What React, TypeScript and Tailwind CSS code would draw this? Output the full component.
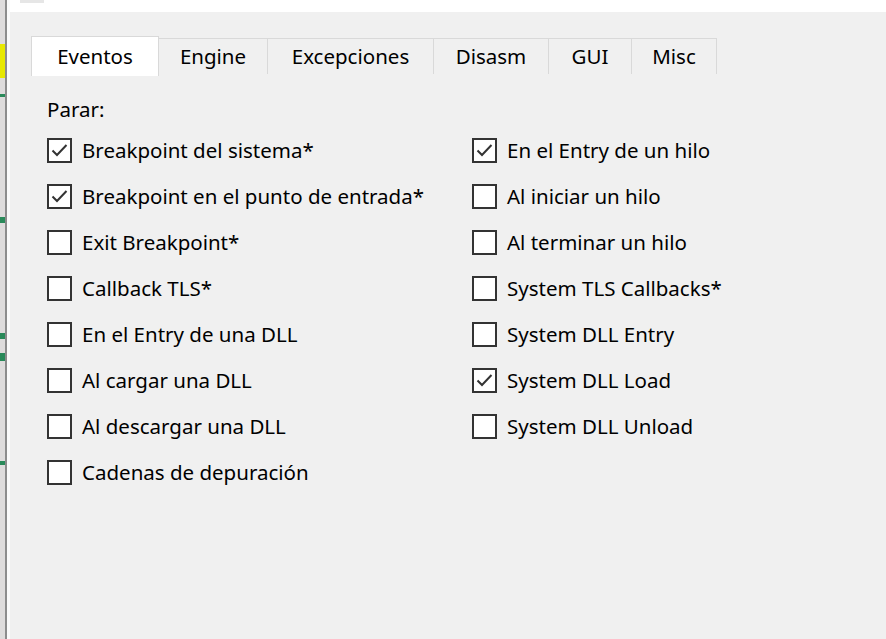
import React from "react";

const font = { fontFamily: '"Noto Sans", "Open Sans", sans-serif' };

function Box({ checked }: { checked: boolean }) {
  return (
    <div className="w-[25px] h-[25px] border-2 border-[#333333] bg-white flex items-center justify-center shrink-0">
      {checked && (
        <svg width="19" height="19" viewBox="0 0 19 19">
          <path d="M2.5 9.5 L7 14 L16.5 4" fill="none" stroke="#333333" strokeWidth="2" />
        </svg>
      )}
    </div>
  );
}

function Item({ label, checked }: { label: string; checked: boolean }) {
  return (
    <div className="flex items-center h-[46px]">
      <Box checked={checked} />
      <span className="ml-[10px] text-[20.5px] text-[#000] whitespace-nowrap">{label}</span>
    </div>
  );
}

const left: [string, boolean][] = [
  ["Breakpoint del sistema*", true],
  ["Breakpoint en el punto de entrada*", true],
  ["Exit Breakpoint*", false],
  ["Callback TLS*", false],
  ["En el Entry de una DLL", false],
  ["Al cargar una DLL", false],
  ["Al descargar una DLL", false],
  ["Cadenas de depuración", false],
];
const right: [string, boolean][] = [
  ["En el Entry de un hilo", true],
  ["Al iniciar un hilo", false],
  ["Al terminar un hilo", false],
  ["System TLS Callbacks*", false],
  ["System DLL Entry", false],
  ["System DLL Load", true],
  ["System DLL Unload", false],
];

const tabs = [
  { name: "Eventos", w: 128 },
  { name: "Engine", w: 109 },
  { name: "Excepciones", w: 166 },
  { name: "Disasm", w: 115 },
  { name: "GUI", w: 83 },
  { name: "Misc", w: 85 },
];

export default function App() {
  return (
    <div className="w-[886px] h-[639px] flex overflow-hidden bg-[#f0f0f0]" style={font}>
      <div className="w-[5px] h-full bg-[#dedcdc] flex flex-col">
        <div className="h-[8px]" />
        <div className="h-[36px]" />
        <div className="h-[34px] bg-[#e8e800]" />
        <div className="h-[16px]" />
        <div className="h-[3px] bg-[#2a8a5a]" />
        <div className="h-[120px]" />
        <div className="h-[6px] bg-[#2a8a5a]" />
        <div className="h-[110px]" />
        <div className="h-[6px] bg-[#2a8a5a]" />
        <div className="h-[14px]" />
        <div className="h-[8px] bg-[#2a8a5a]" />
        <div className="h-[100px]" />
        <div className="h-[4px] bg-[#2a8a5a]" />
      </div>
      <div className="w-[2px] h-full bg-[#8c8c8c]" />
      <div className="w-[3px] h-full bg-[#fafafa]" />
      <div className="flex-1 flex flex-col">
        <div className="h-[12px] bg-white relative">
          <div className="absolute left-[10px] top-0 w-[24px] h-[3px] bg-[#e6e6e6]" />
        </div>
        <div className="flex-1 bg-[#f0f0f0] pl-[21px] pt-[24px]">
          <div className="flex items-start">
            {tabs.map((t, i) =>
              i === 0 ? (
                <div
                  key={t.name}
                  className="h-[40px] bg-white border border-b-0 border-[#d9d9d9] flex items-center justify-center text-[20.5px] text-[#000] relative z-10"
                  style={{ width: t.w }}
                >
                  {t.name}
                </div>
              ) : (
                <div
                  key={t.name}
                  className="h-[36px] mt-[2px] border-t border-r border-[#d9d9d9] flex items-center justify-center text-[20.5px] text-[#000]"
                  style={{ width: t.w }}
                >
                  {t.name}
                </div>
              )
            )}
          </div>
          <div className="pl-[16px]">
            <div className="text-[20.5px] text-[#000] mt-[20px] leading-[26px]">Parar:</div>
            <div className="flex mt-[5px]">
              <div className="w-[425px] flex flex-col">
                {left.map(([l, c]) => (
                  <Item key={l} label={l} checked={c} />
                ))}
              </div>
              <div className="flex flex-col">
                {right.map(([l, c]) => (
                  <Item key={l} label={l} checked={c} />
                ))}
              </div>
            </div>
          </div>
        </div>
      </div>
    </div>
  );
}
